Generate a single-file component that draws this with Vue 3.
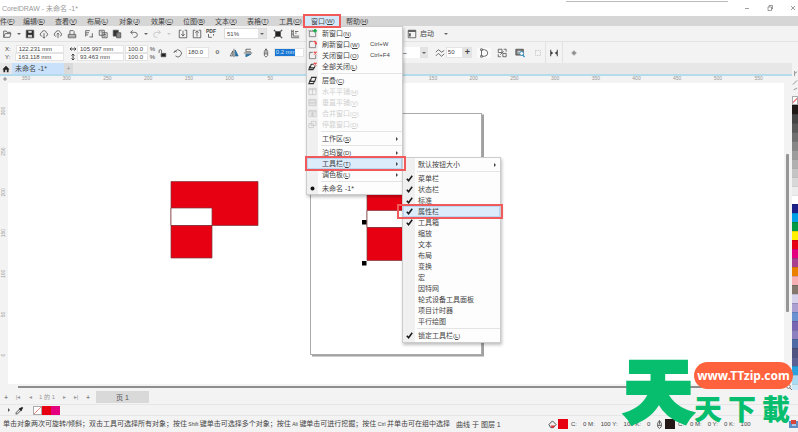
<script setup>
const menusBefore = [
  ['件', 'F'], ['编辑', 'E'], ['查看', 'V'], ['布局', 'L'], ['对象', 'J'],
  ['效果', 'C'], ['位图', 'B'], ['文本', 'X'], ['表格', 'T'], ['工具', 'O'],
]

const windowMenu = [
  { label: '新窗口', key: 'N', icon: 'new' },
  { label: '刷新窗口', key: 'W', icon: 'refresh', shortcut: 'Ctrl+W' },
  { label: '关闭窗口', key: 'O', icon: 'close', shortcut: 'Ctrl+F4' },
  { label: '全部关闭', key: 'L', icon: 'closeAll' },
  { sep: true },
  { label: '层叠', key: 'C', icon: 'cascade' },
  { label: '水平平铺', key: 'H', icon: 'tileH', disabled: true },
  { label: '垂直平铺', key: 'V', icon: 'tileV', disabled: true },
  { label: '合并窗口', key: 'O', icon: 'merge', disabled: true },
  { label: '停靠窗口', key: 'D', icon: 'dock', disabled: true },
  { sep: true },
  { label: '工作区', key: 'S', arrow: true },
  { sep: true },
  { label: '泊坞窗', key: 'D', arrow: true },
  { label: '工具栏', key: 'T', arrow: true, open: true },
  { label: '调色板', key: 'L', arrow: true },
  { sep: true },
  { label: '未命名 -1*', icon: 'dot' },
]

const toolbarMenu = [
  { label: '默认按钮大小', arrow: true },
  { sep: true },
  { label: '菜单栏', checked: true },
  { label: '状态栏', checked: true },
  { label: '标准', checked: true },
  { label: '属性栏', checked: true, active: true },
  { label: '工具箱', checked: true },
  { label: '缩放' },
  { label: '文本' },
  { label: '布局' },
  { label: '变换' },
  { label: '宏' },
  { label: '因特网' },
  { label: '轮式设备工具面板' },
  { label: '项目计时器' },
  { label: '平行绘图' },
  { sep: true },
  { label: '锁定工具栏', key: 'L', checked: true },
]

const swatches = [
  '#1f1a18', '#454545', '#5a5a5a', '#707070', '#868686', '#9c9c9c', '#b0b0b0', '#c4c4c4',
  '#d8d8d8', '#ececec', '#ffffff', '#1d2088', '#00a0e9', '#009944', '#fff100', '#e60012',
  '#e4007f', '#a9408e', '#ea8100', '#f6b0b4', '#84786e', '#d6d2ec', '#aa9fd0', '#6a92d2',
  '#7866b2', '#8d80c0', '#4f6ba6', '#4f5580', '#5a6094', '#2aa2e2', '#a8daf2', '#c9e9f8',
]

const MM50 = 40.7
const hTicks = Array.from({ length: 19 }, (_, i) => ({ x: 26 + i * MM50, n: Math.abs(350 - i * 50) }))
const vTicks = Array.from({ length: 7 }, (_, i) => ({ y: 28 + i * MM50, n: 300 - i * 50 }))
</script>

<template>
  <div class="app">
    <header class="title">
      <span>CorelDRAW - 未命名 -1*</span>
      <i class="topline"></i>
      <div class="win">
        <button aria-label="最小化"><svg viewBox="0 0 8 8"><path d="M2 4.500h4" /></svg></button>
        <button aria-label="还原"><svg viewBox="0 0 8 8"><path d="M2 3h3.500v3.500h-3.500zM3 3v-1.500h3.500v3.500h-1" /></svg></button>
        <button aria-label="关闭"><svg viewBox="0 0 8 8"><path d="M2 2l4 4M6 2l-4 4" /></svg></button>
      </div>
    </header>

    <nav class="menubar">
      <button v-for="m in menusBefore" :key="m[0]" class="top">{{ m[0] }}<small>(<u>{{ m[1] }}</u>)</small></button>
      <div class="holder">
        <button class="top open">窗口<small>(<u>W</u>)</small></button>
        <ul class="menu main-menu">
          <li v-for="(it, i) in windowMenu" :key="i" :class="{ sep: it.sep, on: it.open, off: it.disabled }">
            <button v-if="!it.sep" :disabled="it.disabled">
              <span class="mi">
                <svg v-if="it.icon" viewBox="0 0 10 10">
                  <g v-if="it.icon === 'new'"><path class="ln" d="M1.500 2.500h5M1.500 2v6.500h7v-5M1 1v1M3 1v1M5 1v1" /><path d="M7.800 0v4M5.800 2h4" stroke="#1fae4b" stroke-width="2" /></g>
                  <g v-else-if="it.icon === 'refresh'"><path class="ln" d="M6 1.500h-4.500v7h7v-4M3 1v1.500" /><path d="M6 2q3-1.500 3 2M7.500 3l1.500 1.500 1-1.500" stroke="#e8474a" stroke-width="1.300" fill="none" /></g>
                  <g v-else-if="it.icon === 'close'"><path class="ln" d="M5.500 1.500h-4v7h7v-4M3 1v1.500" /><path d="M6.500 .8l3 3M9.500 .8l-3 3" stroke="#e8474a" stroke-width="1.300" /></g>
                  <g v-else-if="it.icon === 'closeAll'"><path class="ln bold" d="M3.500 2.500h3M3.500 2.500l-1 4h4.500l1-2.500M2 4.500l-1 4h4.500l1-1.500" /><path d="M6.500 .8l3 3M9.500 .8l-3 3" stroke="#e8474a" stroke-width="1.300" /></g>
                  <path v-else-if="it.icon === 'cascade'" class="ln bold" d="M4 1.500h5l-1.500 4.500h-5zM2.500 4l-1.500 4.500h5l1-2.500" />
                  <path v-else-if="it.icon === 'tileH'" class="ln" d="M1 1.500h8v7h-8zM5 1.500v7M1 3h8" />
                  <path v-else-if="it.icon === 'tileV'" class="ln" d="M1 1.500h8v7h-8zM1 5h8M1 3h8M1 6.500h8" />
                  <path v-else-if="it.icon === 'merge'" class="ln" d="M1 1.500h8v7h-8zM1 3h8M3.500 4.500h3v2.500h-3zM5 3v5" />
                  <path v-else-if="it.icon === 'dock'" class="ln" d="M3.500 1.500h5.500v4.500h-5.500zM1 4h5v4.500h-5z" />
                  <circle v-else cx="5" cy="5" r="2.200" fill="#111" />
                </svg>
              </span>
              <span class="lb">{{ it.label }}<small v-if="it.key">(<u>{{ it.key }}</u>)</small></span>
              <span v-if="it.shortcut" class="sc">{{ it.shortcut }}</span>
              <span v-if="it.arrow" class="ar"></span>
            </button>
            <ul v-if="it.open" class="menu sub-menu">
              <li v-for="(s, j) in toolbarMenu" :key="j" :class="{ sep: s.sep, on: s.active }">
                <button v-if="!s.sep">
                  <span class="mi"><svg v-if="s.checked" viewBox="0 0 10 10"><path d="M2 5.200l2 2.300 4-5.500" fill="none" stroke="#1a1a1a" stroke-width="1.700" /></svg></span>
                  <span class="lb">{{ s.label }}<small v-if="s.key">(<u>{{ s.key }}</u>)</small></span>
                  <span v-if="s.arrow" class="ar"></span>
                </button>
              </li>
            </ul>
          </li>
        </ul>
      </div>
      <button class="top">帮助<small>(<u>H</u>)</small></button>
    </nav>

    <div class="bar std">
      <div class="grp">
        <button aria-label="打开" class="ic"><svg viewBox="0 0 12 12"><path d="M2 10v-7.500h3l1 1.500h4v1.500M2 10l1.800-4.500h7l-1.500 4.500z" /></svg></button>
        <i class="caret"></i>
        <button aria-label="保存" class="ic"><svg viewBox="0 0 12 12"><path d="M1.500 1.500h9v9h-9z" fill="#2b2b2b" /><path d="M4 2.500h4v2h-4z" fill="#eee" stroke="none" /><path d="M3.500 7h5v3h-5z" fill="#ccc" stroke="none" /></svg></button>
        <button aria-label="云上传" class="ic"><svg viewBox="0 0 12 12"><path d="M4 8.500h-1q-2-.5-1.500-2.500 .5-1.500 1.500-1.500 1-3 3.500-2.500 2 .3 2.300 2.500 2 .5 1.500 2.500-.5 1.500-2 1.500M6 5v6M4.500 9.500l1.500 1.500 1.500-1.500" /></svg></button>
        <button aria-label="云下载" class="ic"><svg viewBox="0 0 12 12"><path d="M4 8.500h-1q-2-.5-1.500-2.500 .5-1.500 1.500-1.500 1-3 3.500-2.500 2 .3 2.300 2.500 2 .5 1.500 2.500-.5 1.500-2 1.500M6 11v-6M4.500 6.500l1.500-1.500 1.500 1.500" /></svg></button>
        <button aria-label="打印" class="ic"><svg viewBox="0 0 12 12"><path d="M3.500 6.500v-4.500h4l1 1v3.500M1.500 6.500h9v4h-9zM1.500 8.500h9" /></svg></button>
      </div>
      <div class="grp">
        <button aria-label="剪切" class="ic"><svg viewBox="0 0 12 12"><path d="M2 9v-7h5M2 4.500h4M2 7h3M10 5v5M6.500 9.500h4" /></svg></button>
        <button aria-label="复制" class="ic"><svg viewBox="0 0 12 12"><path d="M1.500 1.500h6v6h-6zM5 4.500h6v6h-6zM3 3.500h3M6.500 6.500h3M6.500 8.500h3" /></svg></button>
        <button aria-label="粘贴" class="ic"><svg viewBox="0 0 12 12"><path d="M1.500 1.500h6v7h-6z" fill="#333" /><path d="M5.500 4.500h5v6h-5z" fill="#888" /></svg></button>
      </div>
      <div class="grp">
        <button aria-label="撤消" class="ic"><svg viewBox="0 0 12 12"><path d="M4.500 1.500l-2.500 2.500 2.500 2.500M2 4h5q3 0 3 3t-3 3h-1.500" /></svg></button>
        <i class="caret"></i>
        <button aria-label="重做" class="ic faint"><svg viewBox="0 0 12 12"><path d="M7.500 1.500l2.500 2.500-2.500 2.500M10 4h-5q-3 0-3 3t3 3h1.500" /></svg></button>
        <i class="caret faint"></i>
      </div>
      <div class="grp">
        <button aria-label="导入" class="ic"><svg viewBox="0 0 12 12"><path d="M4 1.500h-2.500v9h9v-9h-2.500M6 2v6M4 6l2 2.500 2-2.500" /></svg></button>
        <button aria-label="导出" class="ic"><svg viewBox="0 0 12 12"><path d="M4 1.500h-2.500v9h9v-9h-2.500M6 9v-6.500M4 4.500l2-2.500 2 2.500" /></svg></button>
        <button aria-label="发布为 PDF" class="ic pdf">PDF<svg viewBox="0 0 12 6"><path d="M3 0v4h4M9 0v2" /></svg></button>
      </div>
      <div class="zoom">
        <select aria-label="缩放级别"><option>51%</option></select>
        <span class="drop"><i class="caret"></i></span>
      </div>
      <div class="grp">
        <button aria-label="全屏预览" class="ic"><svg viewBox="0 0 12 12"><path d="M3 3h6v6h-6z" fill="#222" /><path d="M1 1l2 2M11 1l-2 2M1 11l2-2M11 11l-2-2" stroke-width="1.500" /></svg></button>
      </div>
      <div class="grp">
        <button aria-label="显示标尺" class="ic"><svg viewBox="0 0 12 12"><path d="M2 1v9.500h9M4 1v7.500h7M6 3h4M6 5h2M2 3h1.500M2 6h1.500" /></svg></button>
      </div>
      <div class="grp after">
        <button aria-label="选项" class="ic"><svg viewBox="0 0 12 12"><path d="M1.500 1.500h9v9h-9z" /><path d="M1.500 2.500h9" stroke-width="2" /><path d="M3.500 5v4" stroke-width="2" /></svg></button>
        <button class="launch">启动</button>
        <i class="caret"></i>
      </div>
    </div>

    <div class="bar prop">
      <div class="pairs pos">
        <label>X:<input value="122.231 mm" /></label>
        <label>Y:<input value="163.118 mm" /></label>
      </div>
      <div class="pairs size">
        <label><svg viewBox="0 0 8 8"><path d="M1 4h6M2.500 2.500l-1.500 1.500 1.500 1.500M5.500 2.500l1.500 1.500-1.500 1.500" /></svg><input aria-label="宽度" value="105.997 mm" /></label>
        <label><svg viewBox="0 0 8 8"><path d="M4 1v6M2.500 2.500l1.500-1.500 1.500 1.500M2.500 5.500l1.500 1.500 1.500-1.500" /></svg><input aria-label="高度" value="93.463 mm" /></label>
      </div>
      <div class="pairs pct">
        <label><input value="100.0" />%</label>
        <label><input value="100.0" />%</label>
      </div>
      <button aria-label="锁定比率" class="ic"><svg viewBox="0 0 12 12"><path d="M2.500 6v-2.500q0-1.500 1.500-1.500t1.500 1.500v2.500" /><path d="M5 6.500h5.500v4h-5.500z" fill="#222" /></svg></button>
      <label class="one rot"><svg viewBox="0 0 12 12"><path d="M3 9.500a4.200 4.200 0 1 0-.5-5.500M1 6l1.200-2.500 2.300 1.500" /></svg><input aria-label="旋转角度" value="180.0" /><b>°</b></label>
      <div class="grp mir">
        <button aria-label="水平镜像" class="ic"><svg viewBox="0 0 12 12"><path d="M1.500 9.500l3-6v6zM6 1v10" /><path d="M7.500 2.500v7h3.500z" fill="#2b6f9c" stroke="#2b6f9c" /></svg></button>
        <button aria-label="垂直镜像" class="ic"><svg viewBox="0 0 12 12"><path d="M9.500 1.500h-6v3h6M1 6h10" /><path d="M3.500 7.500h6l-6 3z" fill="#2b6f9c" stroke="#2b6f9c" /></svg></button>
      </div>
      <label class="one pen"><svg viewBox="0 0 12 12"><path d="M6 1l2 3v5l-2 2-2-2v-5zM6 1v5M4 7h4" /></svg><input aria-label="轮廓宽度" class="sel" value="0.2 mm" /></label>
      <div class="line"><span>—</span><span class="drop"><i class="caret"></i></span></div>
      <label class="one smooth"><svg viewBox="0 0 12 12"><path d="M1 5l3-3 4 3 3-2M1 9.500l3-3 4 3.500 3-3" /></svg><input aria-label="平滑度" value="50" /></label>
      <button aria-label="增加" class="drop plus">+</button>
      <div class="grp tools">
        <button aria-label="闭合曲线" class="ic boxed"><svg viewBox="0 0 12 12"><path d="M3 2h3.500q4 .5 4 4t-4 4h-3.500M3 3.500v5" /><path d="M2 1h2v2h-2zM2 9h2v2h-2z" fill="#fff" /></svg></button>
        <button aria-label="组合" class="ic"><svg viewBox="0 0 12 12"><path d="M1.500 1.500h4.500v4h-4.500zM7 6.500h4v4h-4zM8 1.500h3v3M1.500 7.500v3h3M4 8l4-4" /></svg></button>
        <button aria-label="对象属性" class="ic"><svg viewBox="0 0 12 12"><path d="M1 1.500h9v7h-9z" fill="#777" /><path d="M3 4h4M3 6h3" stroke="#fff" /><circle cx="8" cy="6.500" r="2.300" fill="#fff" stroke="#258dc0" /><path d="M9.500 8.500l2 2.500" stroke="#258dc0" stroke-width="1.500" /></svg></button>
        <button aria-label="边框" class="ic faint"><svg viewBox="0 0 12 12"><path d="M3 3h6v6h-6z" stroke-dasharray="1.500 1" /></svg></button>
      </div>
      <div class="grp edge">
        <button aria-label="对齐" class="ic"><svg viewBox="0 0 12 12"><path d="M2 2v8M10 2v8" stroke-width="1.300" /><path d="M2.500 4l2.500 2-2.500 2zM9.500 4l-2.500 2 2.500 2z" fill="#333" stroke="none" /></svg></button>
      </div>
      <button aria-label="添加" class="ic add"><svg viewBox="0 0 12 12"><circle cx="6" cy="6" r="2.500" fill="#bbb" stroke="none" /><path d="M6 3v6M3 6h6" stroke="#777" /></svg></button>
    </div>

    <div class="work">
      <main class="doc">
        <div class="tabs">
          <button aria-label="主页" class="home"><svg viewBox="0 0 10 10"><path d="M5 1l-4.500 4.500h1.300v3.500h2.200v-3h2v3h2.200v-3.500h1.300z" fill="#222" /></svg></button>
          <button class="tab">未命名 -1*</button>
          <button class="newtab" aria-label="新建">+</button>
        </div>
        <svg class="hruler">
          <path d="M3 3h4M5 1v4" stroke="#888" />
          <text v-for="t in hTicks" :key="t.x" :x="t.x" y="4">{{ t.n }}</text>
        </svg>
        <div class="stage">
          <svg class="vruler">
            <g v-for="t in vTicks" :key="t.y" :transform="`translate(5 ${t.y}) rotate(-90)`"><text x="0" y="0">{{ t.n }}</text></g>
          </svg>
          <svg class="canvas">
            <path d="M304 272.500h171v-241" fill="none" stroke="#a0a0a0" stroke-width="2" />
            <rect x="302.500" y="30.500" width="171" height="241" fill="#fff" stroke="#aaa" />
            <g stroke="#7c3a3e" stroke-width=".7">
              <path d="M163 98.500h87v44h-87z" fill="#e60012" />
              <path d="M163 125h41v17.500h-41z" fill="#fff" />
              <path d="M163 142.500h41v32.500h-41z" fill="#e60012" />
              <path d="M359 101h87v43.500h-87z" fill="#e60012" />
              <path d="M359 127.500h41v17h-41z" fill="#fff" />
              <path d="M359 144.500h41v33h-41z" fill="#e60012" />
            </g>
            <path d="M354 137h4.500v4.500h-4.500zM354 178h4.500v4.500h-4.500z" fill="#000" />
          </svg>
          <div class="vscroll"><i></i></div>
        </div>
        <div class="hscroll">
          <i></i>
          <svg viewBox="0 0 6 6"><circle cx="2.500" cy="2.500" r="1.800" fill="#fff" stroke="#777" /><path d="M4 4l2 2" stroke="#777" /></svg>
        </div>
      </main>
      <aside class="palette">
        <svg viewBox="0 0 7 32"><path d="M3 6v6M3 9l3-2M1 22l5-5M2 28l4-2" stroke="#888" fill="none" /></svg>
        <span class="none"></span>
        <span v-for="(c, i) in swatches" :key="i" class="sw" :style="{ background: c }"></span>
      </aside>
    </div>

    <div class="pages">
      <button>+</button><button class="dim">|◂</button><button class="dim">◂</button>
      <span class="count">1 的 1</span>
      <button class="dim">▸</button><button class="dim">▸|</button><button>+</button>
      <button class="page">页 1</button>
    </div>

    <div class="docpal">
      <i class="tri"></i>
      <svg viewBox="0 0 10 10"><path d="M1 9l.5-2 4-4 1.500 1.500-4 4z" fill="#ddd" stroke="#555" /><path d="M5 2.500l2.500 2.500M6.500 3.500l2-2" stroke="#222" stroke-width="2" /></svg>
      <span class="chips"><i class="none"></i><i class="red"></i><i class="mag"></i></span>
    </div>

    <footer class="status">
      <p>单击对象两次可旋转/倾斜；双击工具可选择所有对象；按住<small> Shift </small>键单击可选择多个对象；按住<small> Alt </small>键单击可进行挖掘；按住<small> Ctrl </small>并单击可在组中选择</p>
      <span class="obj">曲线 于 图层 1</span>
      <svg class="fillic" viewBox="0 0 10 10"><path d="M1 5l4-4 4 4-3 3.500h-3z" fill="#eee" stroke="#444" /><path d="M3 6h5l-2 2.500h-2z" fill="#d33" /></svg>
      <i class="chip red"></i>
      <span class="cmyk"><b>C:</b><b>0 M:</b><b>100 Y:</b><b>100 K:</b><b>0</b></span>
      <svg class="penic" viewBox="0 0 10 10"><path d="M5 .5l2 3v4l-2 2-2-2v-4zM5 1v4M3 6h4" fill="none" stroke="#555" /></svg>
      <i class="chip blk"></i>
      <span class="cmyk"><b>C:</b><b>0 M:</b><b>0 Y:</b><b>0 K:</b><b>100</b></span>
      <svg class="tray" viewBox="0 0 9 9"><path d="M0 1h9v7h-9z" fill="#5b8fc4" /><path d="M2 0h5v4h-5z" fill="#d9463c" /><path d="M3 5h4" stroke="#fff" /></svg>
    </footer>

    <div class="brand">
      <span class="big">天</span>
      <div class="side">
        <a href="#" class="pill">www.TTzip.com</a>
        <span class="small"><b>天</b><b>下</b><b>載</b></span>
      </div>
    </div>
  </div>
</template>

<style>
body { margin: 0; overflow: hidden; }
</style>

<style scoped>
.app {
  position: relative; display: flex; flex-direction: column; height: 100vh; overflow: hidden;
  background: #f3f3f3; color: #444;
  font: 7px/11px "Liberation Sans", "Noto Sans CJK SC", sans-serif;
}
button, input, select { font: inherit; color: inherit; border: 0; padding: 0; margin: 0; background: none; border-radius: 0; }
button { display: flex; align-items: center; white-space: nowrap; flex: none; }
ul { list-style: none; margin: 0; padding: 0; }
small { font-size: 6px; }
svg { fill: none; stroke: none; }

.title { display: flex; justify-content: space-between; height: 16px; padding: 0 1px 0 2px; background: #fff; color: #999; line-height: 18px; flex: none; }
.topline { width: 162px; height: 1px; margin: 1px 15px 0 auto; background: #bbb; }
.win { display: flex; gap: 15px; }
.win svg { width: 8px; height: 8px; stroke: #777; stroke-width: .7; }

.menubar { display: flex; height: 10px; flex: none; background: #d6d6d6; }
.top { width: 32px; height: 10px; }
.menubar > .top:first-child { width: 23px; }
.holder { position: relative; width: 35px; }
.open { position: relative; z-index: 5; box-sizing: border-box; width: 38px; height: 14px; margin: -2px -8px; padding-left: 6px; border: 2px solid #f05a5a; background: #d5e8fa; }

.menu { position: absolute; z-index: 4; box-sizing: border-box; padding-top: 1px; border: 1px solid #ccc; background: linear-gradient(90deg, #f0f0f0 11px, #fdfdfd 11px); box-shadow: 1px 2px 3px rgba(0, 0, 0, .25); }
.main-menu { top: 10px; left: -5px; width: 97px; height: 169px; }
.sub-menu { top: -1px; left: 95px; width: 99px; height: 186px; background: linear-gradient(90deg, #f0f0f0 12px, #fdfdfd 12px); }
.menu li { position: relative; height: 11px; color: #444; }
.menu li.sep { height: 1px; margin: 1px 0 1px 14px; background: #e4e4e4; }
.menu button { width: 100%; height: 11px; position: relative; }
.mi { display: flex; justify-content: center; width: 11px; }
.mi svg { width: 9px; height: 9px; }
.sub-menu .mi { width: 12px; }
.lb { flex: 1; padding-left: 4px; text-align: left; }
.sub-menu .lb { padding-left: 3px; }
.ln { stroke: #666; stroke-width: .8; }
.ln.bold { stroke: #333; stroke-width: 1.2; }
.sc { width: 32px; text-align: left; font-size: 6px; }
.ar { margin-right: 4px; border: 2px solid transparent; border-left-color: #444; border-right: 0; }
.menu li.off { color: #d0d0d0; }
.off button { color: inherit; }
.off .ln { stroke: #c4c4c4; }
.menu li.on > button { background: #dcecfb; box-shadow: inset 0 0 0 1px #b8d6f2; }
.menu li.on::after { content: ""; position: absolute; inset: -2px -4px -2px -2px; border: 2px solid #f05a5a; z-index: 6; pointer-events: none; }
.menu.sub-menu li.on::after { inset: -2px -3px -2px -6px; }

.bar { display: flex; align-items: center; flex: none; overflow: hidden; }
.std { box-sizing: border-box; height: 16px; gap: 3px; border-bottom: 1px solid #e2e2e2; }
.prop { height: 21px; }
.grp { display: flex; align-items: center; flex: none; }
.ic { width: 14px; justify-content: center; }
.ic svg, .one svg { width: 10px; height: 10px; stroke: #555; stroke-width: 1; flex: none; }
.caret { display: block; width: 0; margin: 0 2px 0 3px; border: 2px solid transparent; border-top-color: #666; border-bottom: 0; flex: none; }
.faint { opacity: .3; }
.pdf { flex-direction: column; font-size: 5px; line-height: 5px; font-weight: bold; }
.ic.pdf svg { width: 10px; height: 5px; }
.zoom { display: flex; margin: 0 1px 0 3px; height: 11px; border: 1px solid #ddd; box-sizing: border-box; background: #fff; width: 43px; }
.zoom select { flex: 1; appearance: none; padding-left: 2px; font-size: 6px; min-width: 0; }
.drop { display: flex; align-items: center; justify-content: center; width: 8px; background: #e3e3e3; }
.drop .caret { margin: 0; }
.after { margin-left: 100px; }
.launch { width: 22px; padding-left: 1px; }

.pairs { display: flex; flex-direction: column; flex: none; }
.pairs label { display: flex; align-items: center; height: 8px; font-size: 6px; line-height: 8px; }
.pairs input { box-sizing: border-box; height: 8px; border: 1px solid #e4e4e4; background: #fff; padding-left: 2px; min-width: 0; flex: 1; }
.pairs svg { width: 8px; height: 8px; stroke: #444; }
.pos { width: 59px; margin-left: 5px; }
.pos label { gap: 5px; }
.size { width: 55px; margin-left: 5px; }
.pct { width: 30px; margin-left: 1px; }
.pct label { gap: 2px; }
.one { display: flex; align-items: center; gap: 3px; flex: none; font-size: 6px; }
.one input { box-sizing: border-box; height: 11px; border: 1px solid #e4e4e4; background: #fff; padding-left: 1px; }
.rot { margin-left: 4px; }
.rot input { width: 23px; }
.rot b { font-size: 12px; font-weight: normal; padding: 5px 0 0 3px; }
.mir { margin-left: 7px; }
.pen { margin-left: 6px; }
.pen input { width: 30px; }
.pen .sel { background: linear-gradient(90deg, #1976d2 20px, #fff 20px); color: #cfe4fa; height: 9px; }
.line { display: flex; justify-content: space-between; width: 28px; height: 11px; margin-left: 96px; background: #fff; line-height: 11px; }
.smooth { margin-left: 7px; gap: 1px; }
.smooth input { width: 17px; }
.plus { height: 11px; width: 9px; font-size: 9px; font-weight: bold; }
.tools { margin-left: 5px; gap: 4px; }
.boxed { background: #fafafa; }
.edge { padding: 0 1px; height: 21px; border: solid #e2e2e2; border-width: 0 1px; }
.add { margin-left: 4px; }

.work { display: flex; flex: 1; min-height: 0; }
.doc { display: flex; flex-direction: column; flex: 1; min-width: 0; }
.tabs { box-sizing: border-box; display: flex; height: 13px; flex: none; background: #e7e7e7; border-bottom: 2px solid #b5dced; }
.home { width: 12px; justify-content: center; }
.home svg { width: 8px; height: 8px; }
.tab { width: 52px; padding-left: 3px; background: #c9e1fb; }
.newtab { width: 9px; justify-content: center; background: #dadada; color: #999; }
.hruler { width: 100%; height: 7px; flex: none; background: #f3f3f3; }
text { font-size: 5px; fill: #999; text-anchor: middle; }
.stage { display: flex; flex: 1; min-height: 0; }
.vruler { width: 8px; height: 100%; flex: none; }
.canvas { flex: 1; min-width: 0; height: 100%; background: #fff; }
.vscroll { width: 8px; flex: none; padding: 71px 3px 0 2px; box-sizing: border-box; }
.vscroll i { display: block; width: 3px; height: 158px; background: #969696; border-radius: 1px; }
.hscroll { display: flex; align-items: center; gap: 2px; height: 6px; padding-left: 18px; flex: none; }
.hscroll i { flex: 1; height: 2px; background: #8e8e8e; }
.hscroll svg { width: 6px; height: 6px; }
.palette { width: 6px; display: flex; flex-direction: column; flex: none; overflow: hidden; }
.palette svg { width: 6px; height: 33px; flex: none; }
.none { background: linear-gradient(135deg, #fff 45%, #e88 45%, #e88 55%, #fff 55%); border: 1px solid #aaa; box-sizing: border-box; }
.palette .none, .sw { height: 9px; flex: none; box-sizing: border-box; }
.sw { border-top: 1px solid rgba(0, 0, 0, .12); }

.pages { display: flex; align-items: center; height: 14px; flex: none; color: #555; }
.pages button { width: 12px; justify-content: center; }
.pages .dim, .count { color: #999; font-size: 6px; }
.count { width: 22px; text-align: center; white-space: nowrap; }
.pages .page { width: 53px; height: 12px; margin-left: 2px; background: #d9d9d9; }
.docpal { display: flex; align-items: center; height: 10px; flex: none; border-top: 1px solid #e6e6e6; padding-left: 8px; }
.tri { border: 2px solid transparent; border-left-color: #555; border-right: 0; margin-right: 5px; }
.docpal svg { width: 9px; height: 9px; margin-right: 9px; }
.chips { display: flex; }
.chips i { width: 9px; height: 9px; }
.red { background: #e60012; }
.mag { background: #e4007f; }
.status { display: flex; align-items: center; height: 16px; flex: none; border-top: 1px solid #e6e6e6; padding-left: 3px; white-space: nowrap; }
.status p { margin: 0; width: 453px; flex: none; }
.status p small { font-size: 5px; }
.obj { width: 92px; }
.fillic, .penic { width: 9px; height: 9px; flex: none; }
.chip { width: 10px; height: 10px; margin-left: 1px; flex: none; }
.blk { background: #231815; }
.cmyk { display: flex; gap: 6px; width: 84px; padding-left: 3px; font-size: 6px; }
.cmyk b { font-weight: normal; }
.tray { width: 9px; height: 9px; margin-left: auto; flex: none; }

.brand { position: absolute; right: 8px; bottom: 5px; z-index: 9; display: flex; align-items: flex-end; color: #06be6e; font-family: "Noto Sans CJK TC", sans-serif; font-weight: 900; }
.big { width: 70px; padding-bottom: 6px; font-size: 69px; line-height: 68px; -webkit-text-stroke: 4px #06be6e; }
.side { display: flex; flex-direction: column; align-items: flex-end; }
.pill { box-sizing: border-box; width: 99px; height: 27px; margin-right: -3px; border-radius: 14px; background: #ff623d; color: #fff; font: bold 12px/27px "Noto Sans", sans-serif; text-align: center; text-decoration: none; }
.small { display: flex; gap: 6px; font-size: 28px; line-height: 38px; font-weight: 700; }
</style>
